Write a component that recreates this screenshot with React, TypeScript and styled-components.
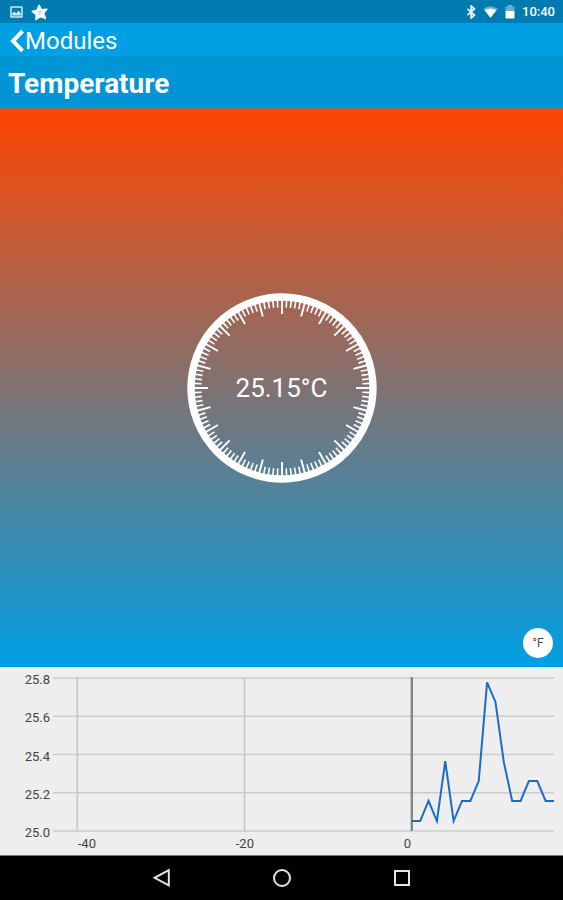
import React from "react";
import styled, { createGlobalStyle } from "styled-components";

const GlobalStyle = createGlobalStyle`
  *, *::before, *::after { box-sizing: border-box; }
  body { margin: 0; background: #000; font-family: Roboto, sans-serif; }
  button { font-family: inherit; }
`;

const Screen = styled.div`
  display: flex;
  flex-direction: column;
  min-height: 100vh;
`;

const StatusBar = styled.div`
  display: flex;
  align-items: center;
  justify-content: space-between;
  height: 23px;
  padding: 1px 8px 0 10px;
  background: #007bb0;
  color: #fff;
`;

const StatusGroup = styled.div<{ $gap: number }>`
  display: flex;
  align-items: center;
  gap: ${(p) => p.$gap}px;
`;

const Clock = styled.span`
  font-size: 13px;
  line-height: 16px;
  font-weight: 500;
`;

const NavBar = styled.nav`
  display: flex;
  align-items: center;
  height: 33px;
  padding: 2px 0 0 10px;
  background: #009fe4;
`;

const BackLink = styled.a`
  display: flex;
  align-items: center;
  gap: 1px;
  color: #fff;
  font-size: 24px;
  line-height: 30px;
  text-decoration: none;
`;

const TitleBar = styled.header`
  display: flex;
  align-items: center;
  height: 53px;
  padding: 3px 8px 0;
  background: #0095d4;
  border-bottom: 1px solid #93705f;
`;

const Title = styled.h1`
  margin: 0;
  color: #fff;
  font-size: 28px;
  line-height: 36px;
  font-weight: 700;
`;

const GaugePanel = styled.main`
  flex: 1;
  display: grid;
  grid-template-rows: 1fr auto 1fr;
  justify-items: center;
  background: linear-gradient(#ff4500, #009fe4);
`;

const Gauge = styled.div`
  grid-row: 2;
  display: grid;
  place-items: center;

  > * { grid-area: 1 / 1; }
`;

const Reading = styled.output`
  color: #fff;
  font-size: 26px;
  line-height: 32px;
  font-weight: 400;
`;

const UnitButton = styled.button`
  grid-row: 3;
  place-self: end;
  width: 30px;
  height: 30px;
  margin: 0 10px 9px 0;
  padding: 0;
  border: 0;
  border-radius: 50%;
  background: #fff;
  color: #444;
  font-size: 12px;
  line-height: 30px;
`;

const ChartPanel = styled.section`
  display: grid;
  grid-template-columns: 50px 1fr;
  column-gap: 3px;
  padding: 10px 9px 4px 0;
  background: #eee;
  border-top: 1px solid #c9e4f0;
  border-bottom: 1px solid #777;
  color: #444;
  font-size: 13px;
  line-height: 14px;
`;

const YAxis = styled.div`
  display: flex;
  flex-direction: column;
  justify-content: space-between;
  align-items: flex-end;
  height: 167px;
  margin-top: -5px;
`;

const Plot = styled.svg`
  display: block;
  width: 100%;
  height: 153px;
  overflow: visible;
`;

const XAxis = styled.div`
  grid-column: 2;
  display: grid;
  grid-template-columns: 43fr 158fr 157fr 143fr;
  margin-top: -3px;
`;

const XLabel = styled.span`
  justify-self: end;
  text-align: right;
`;

const SystemBar = styled.footer`
  display: flex;
  align-items: center;
  justify-content: center;
  gap: 96px;
  height: 44px;
  background: #000;
`;

const SystemButton = styled.button`
  display: grid;
  place-items: center;
  width: 24px;
  height: 24px;
  padding: 0;
  border: 0;
  background: none;
`;

const PictureIcon = () => (
  <svg width="13" height="12" viewBox="0 0 13 12" aria-hidden="true">
    <rect x="1" y="1" width="11" height="10" rx="0.6" fill="none" stroke="#d4eaf4" strokeWidth="1.5" />
    <path d="M2.3 9.5V7.4L4.2 5.6 6.2 7.4 8.6 4.6 10.8 7.4V9.5Z" fill="#d4eaf4" />
  </svg>
);

const StarIcon = () => (
  <svg width="17" height="17" viewBox="0 0 17 17" aria-hidden="true">
    <path
      d="M8.1 1 10.5 5.5 16 5.2 12.8 9.3 14.6 14.6 9.5 12.7 4.8 15.8 5 10.7 1 7.3 6 6Z"
      fill="#fff" stroke="#fff" strokeWidth="1.2" strokeLinejoin="round"
    />
    <path d="M6.8 7.6 10.2 7.2 7.4 10.3 10.6 9.8" fill="none" stroke="#8fc3dc" strokeWidth="0.8" />
  </svg>
);

const BluetoothIcon = () => (
  <svg width="10" height="14" viewBox="0 0 10 14" aria-hidden="true">
    <path d="M1.4 3.8 8.4 10 5.2 13V1L8.4 4 1.4 10.2" fill="none" stroke="#e6f4fa" strokeWidth="1.8" />
  </svg>
);

const WifiIcon = () => (
  <svg width="15" height="12" viewBox="0 0 15 12" aria-hidden="true">
    <path d="M0.3 3Q7.5-2.6 14.7 3L7.5 11.8Z" fill="#65b0d0" />
    <path d="M1.6 4.2Q7.5 1 13.4 4.2L7.5 11.8Z" fill="#fff" />
  </svg>
);

const BatteryIcon = () => (
  <svg width="10" height="14" viewBox="0 0 10 14" aria-hidden="true">
    <path d="M3 0H7V1.5H9.5V6H0.5V1.5H3Z" fill="#65b0d0" />
    <path d="M0.5 6H9.5V13.5H0.5Z" fill="#fff" />
  </svg>
);

const BackChevron = () => (
  <svg width="14" height="24" viewBox="0 0 14 24" aria-hidden="true">
    <path d="M12.5 2.2 3 12 12.5 21.8" fill="none" stroke="#fff" strokeWidth="4" />
  </svg>
);

const TICKS = Array.from({ length: 120 }, (_, i) => i);

const Dial = () => (
  <svg width="190" height="190" viewBox="-95 -95 190 190" aria-hidden="true">
    <circle r="91" fill="none" stroke="#fff" strokeWidth="7.4" />
    {TICKS.map((i) => {
      const major = i % 5 === 0;
      return (
        <line
          key={i}
          y1={-88}
          y2={major ? -74 : -80.5}
          stroke="#fff"
          strokeWidth={major ? 1.9 : 1.6}
          transform={`rotate(${i * 3})`}
        />
      );
    })}
  </svg>
);

const X_MIN = -42.9;
const X_MAX = 17;
const Y_MIN = 25;
const Y_MAX = 25.8;
const SAMPLES = [
  25.052, 25.052, 25.157, 25.052, 25.365, 25.052, 25.157, 25.157, 25.261,
  25.777, 25.675, 25.36, 25.157, 25.157, 25.261, 25.261, 25.157, 25.157,
];
const Y_LABELS = ["25.8", "25.6", "25.4", "25.2", "25.0"];
const X_LABELS = [-40, -20, 0];

const px = (x: number) => ((x - X_MIN) / (X_MAX - X_MIN)) * 501;
const py = (y: number) => ((Y_MAX - y) / (Y_MAX - Y_MIN)) * 153;

const TemperaturePlot = () => (
  <Plot viewBox="0 0 501 153" preserveAspectRatio="none" role="img" aria-label="Temperature history">
    {Y_LABELS.map((label) => (
      <line key={label} x1="0" x2="501" y1={py(Number(label))} y2={py(Number(label))}
        stroke="#ccc" strokeWidth="1.4" vectorEffect="non-scaling-stroke" />
    ))}
    {X_LABELS.map((x) => (
      <line key={x} x1={px(x)} x2={px(x)} y1="-1" y2="153"
        stroke={x === 0 ? "#858585" : "#c8c8c8"} strokeWidth={x === 0 ? 2.4 : 1.6}
        vectorEffect="non-scaling-stroke" />
    ))}
    <polyline
      points={SAMPLES.map((v, i) => `${px(i)},${py(v)}`).join(" ")}
      fill="none" stroke="#1a6cc8" strokeWidth="2" vectorEffect="non-scaling-stroke"
    />
  </Plot>
);

export default function App() {
  return (
    <>
      <GlobalStyle />
      <Screen>
        <StatusBar>
          <StatusGroup $gap={8}>
            <PictureIcon />
            <StarIcon />
          </StatusGroup>
          <StatusGroup $gap={7}>
            <BluetoothIcon />
            <WifiIcon />
            <BatteryIcon />
            <Clock>10:40</Clock>
          </StatusGroup>
        </StatusBar>
        <NavBar>
          <BackLink href="#modules">
            <BackChevron />
            Modules
          </BackLink>
        </NavBar>
        <TitleBar>
          <Title>Temperature</Title>
        </TitleBar>
        <GaugePanel>
          <Gauge>
            <Dial />
            <Reading>25.15°C</Reading>
          </Gauge>
          <UnitButton type="button" aria-label="Switch to °F">°F</UnitButton>
        </GaugePanel>
        <ChartPanel>
          <YAxis>
            {Y_LABELS.map((label) => (
              <span key={label}>{label}</span>
            ))}
          </YAxis>
          <TemperaturePlot />
          <XAxis>
            <XLabel>-40</XLabel>
            <XLabel>-20</XLabel>
            <XLabel>0</XLabel>
          </XAxis>
        </ChartPanel>
        <SystemBar>
          <SystemButton type="button" aria-label="Back">
            <svg width="20" height="20" viewBox="0 0 20 20">
              <path d="M16.8 2.2V17.4L2.6 9.8Z" fill="none" stroke="#e4e4e4" strokeWidth="2" />
            </svg>
          </SystemButton>
          <SystemButton type="button" aria-label="Home">
            <svg width="20" height="20" viewBox="0 0 20 20">
              <circle cx="10" cy="10" r="8" fill="none" stroke="#e4e4e4" strokeWidth="2" />
            </svg>
          </SystemButton>
          <SystemButton type="button" aria-label="Recent apps">
            <svg width="20" height="20" viewBox="0 0 20 20">
              <rect x="3" y="3" width="14" height="14" fill="none" stroke="#e4e4e4" strokeWidth="2" />
            </svg>
          </SystemButton>
        </SystemBar>
      </Screen>
    </>
  );
}
